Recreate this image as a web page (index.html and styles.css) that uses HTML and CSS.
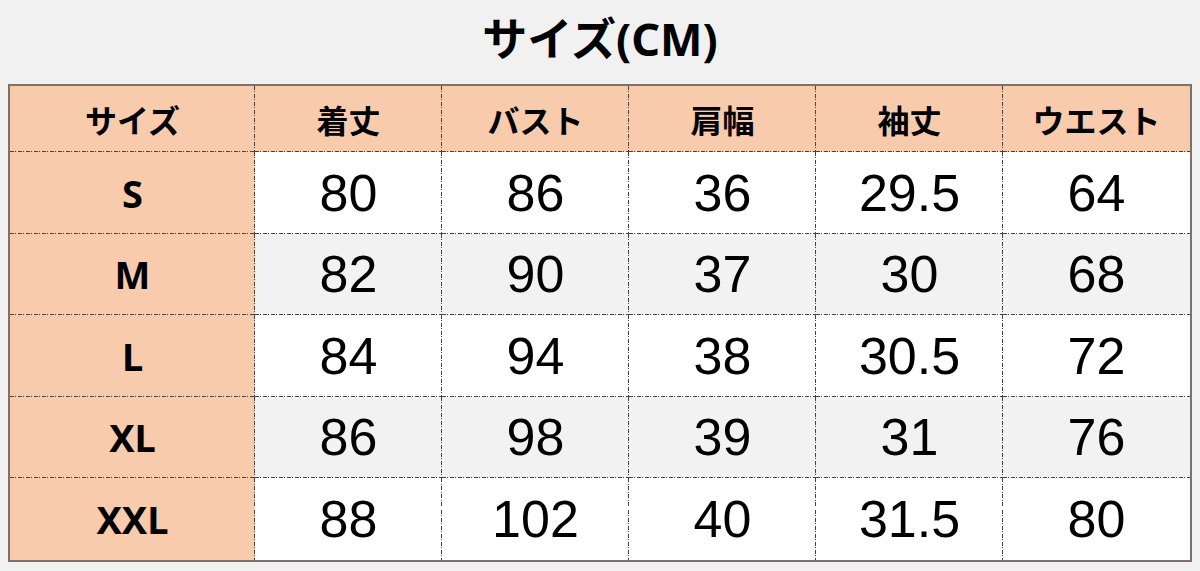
FILE: index.html
```html
<!DOCTYPE html>
<html lang="ja">
<head>
<meta charset="utf-8">
<title>サイズ(CM)</title>
<link rel="stylesheet" href="styles.css">
</head>
<body>
<div class="page">
  <h1 class="title">サイズ(CM)</h1>
  <div class="table">
    <div class="cell head">サイズ</div>
    <div class="cell head">着丈</div>
    <div class="cell head">バスト</div>
    <div class="cell head">肩幅</div>
    <div class="cell head">袖丈</div>
    <div class="cell head last-col">ウエスト</div>

    <div class="cell label">S</div>
    <div class="cell num">80</div>
    <div class="cell num">86</div>
    <div class="cell num">36</div>
    <div class="cell num">29.5</div>
    <div class="cell num last-col">64</div>

    <div class="cell label">M</div>
    <div class="cell num alt">82</div>
    <div class="cell num alt">90</div>
    <div class="cell num alt">37</div>
    <div class="cell num alt">30</div>
    <div class="cell num alt last-col">68</div>

    <div class="cell label">L</div>
    <div class="cell num">84</div>
    <div class="cell num">94</div>
    <div class="cell num">38</div>
    <div class="cell num">30.5</div>
    <div class="cell num last-col">72</div>

    <div class="cell label">XL</div>
    <div class="cell num alt">86</div>
    <div class="cell num alt">98</div>
    <div class="cell num alt">39</div>
    <div class="cell num alt">31</div>
    <div class="cell num alt last-col">76</div>

    <div class="cell label last-row">XXL</div>
    <div class="cell num last-row">88</div>
    <div class="cell num last-row">102</div>
    <div class="cell num last-row">40</div>
    <div class="cell num last-row">31.5</div>
    <div class="cell num last-row last-col">80</div>
  </div>
</div>
</body>
</html>
```

FILE: styles.css
```css
html, body {
  margin: 0;
  padding: 0;
  background: #f1f1f1;
}

.page {
  width: 1200px;
  height: 571px;
  display: flex;
  flex-direction: column;
  align-items: center;
}

.title {
  margin: 0;
  height: 72px;
  display: flex;
  align-items: center;
  font-family: "Noto Sans", "Noto Sans CJK JP", sans-serif;
  font-weight: 700;
  font-size: 45px;
  color: #000;
  margin-bottom: 12px;
}

.table {
  display: grid;
  grid-template-columns: 245px repeat(5, 187px);
  grid-template-rows: 66px repeat(5, 81.5px);
  border: 2px solid #7d716b;
  background: #ffffff;
}

.cell {
  display: flex;
  align-items: center;
  justify-content: center;
  color: #000;
  background-color: #ffffff;
  background-image:
    repeating-linear-gradient(to right, #444 0 4px, transparent 4px 5.5px, #444 5.5px 6.5px, transparent 6.5px 8px),
    repeating-linear-gradient(to bottom, #444 0 4px, transparent 4px 5.5px, #444 5.5px 6.5px, transparent 6.5px 8px);
  background-size: 100% 1px, 1px 100%;
  background-position: left bottom, right top;
  background-repeat: no-repeat;
}

.last-col {
  background-image:
    repeating-linear-gradient(to right, #444 0 4px, transparent 4px 5.5px, #444 5.5px 6.5px, transparent 6.5px 8px);
  background-size: 100% 1px;
  background-position: left bottom;
}

.last-row {
  background-image:
    repeating-linear-gradient(to bottom, #444 0 4px, transparent 4px 5.5px, #444 5.5px 6.5px, transparent 6.5px 8px);
  background-size: 1px 100%;
  background-position: right top;
}

.last-row.last-col {
  background-image: none;
}

.head,
.label {
  background-color: #f8cbad;
  font-family: "Noto Sans", "Noto Sans CJK JP", sans-serif;
  font-weight: 700;
}

.head {
  font-size: 32px;
}

.label {
  font-size: 38px;
}

.num {
  font-family: "Liberation Sans", Arial, sans-serif;
  font-size: 52px;
}

.alt {
  background-color: #f2f2f2;
}
```
